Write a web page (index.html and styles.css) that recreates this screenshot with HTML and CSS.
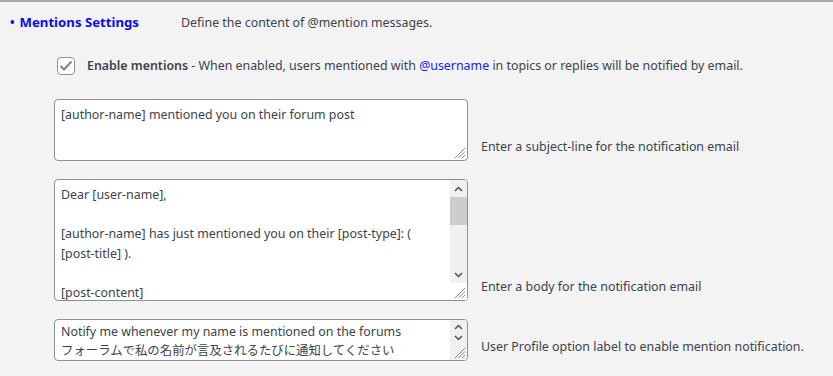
FILE: index.html
```html
<!DOCTYPE html>
<html lang="en">

<head>
    <meta charset="UTF-8">
    <meta name="viewport" content="width=device-width, initial-scale=1.0">
    <title>Mentions Settings</title>
    <link rel="stylesheet" href="styles.css">
</head>

<body>

    <div class="settings">

        <div class="head">
            <h3 class="title"><span class="dot">&bull;</span>Mentions Settings</h3>
            <p class="intro">Define the content of @mention messages.</p>
        </div>

        <label class="check-row">
            <span class="checkbox">
                <svg width="14" height="12" viewBox="0 0 14 12">
                    <polyline points="1.5,6 5,9.5 12.5,1.5" fill="none" stroke="#7e8993" stroke-width="2.2" />
                </svg>
            </span>
            <span class="check-text"><b>Enable mentions</b> - When enabled, users mentioned with <a href="#">@username</a> in topics or replies will be notified by email.</span>
        </label>

        <!-- subject -->
        <div class="field">
            <div class="box box-subject">
                <div class="box-text">[author-name] mentioned you on their forum post</div>
                <span class="grip">
                    <svg width="11" height="11" viewBox="0 0 11 11">
                        <path d="M11 1 L1 11 M11 4.5 L4.5 11 M11 8 L8 11" stroke="#8a8a8a" stroke-width="1" />
                    </svg>
                </span>
            </div>
            <span class="hint">Enter a subject-line for the notification email</span>
        </div>

        <!-- body -->
        <div class="field">
            <div class="box box-body">
                <div class="box-text">
                    Dear [user-name],<br>
                    <br>
                    [author-name] has just mentioned you on their [post-type]: (<br>
                    [post-title] ).<br>
                    <br>
                    [post-content]
                </div>
                <div class="scroll">
                    <span class="arrow">
                        <svg width="9" height="6" viewBox="0 0 9 6"><polyline points="1,5 4.5,1.5 8,5" fill="none" stroke="#505050" stroke-width="1.5" /></svg>
                    </span>
                    <span class="thumb"></span>
                    <span class="track"></span>
                    <span class="arrow">
                        <svg width="9" height="6" viewBox="0 0 9 6"><polyline points="1,1 4.5,4.5 8,1" fill="none" stroke="#505050" stroke-width="1.5" /></svg>
                    </span>
                    <span class="corner">
                        <svg width="11" height="11" viewBox="0 0 11 11">
                            <path d="M11 1 L1 11 M11 4.5 L4.5 11 M11 8 L8 11" stroke="#8a8a8a" stroke-width="1" />
                        </svg>
                    </span>
                </div>
            </div>
            <span class="hint">Enter a body for the notification email</span>
        </div>

        <!-- profile label -->
        <div class="field">
            <div class="box box-label">
                <div class="box-text">
                    Notify me whenever my name is mentioned on the forums<br>
                    フォーラムで私の名前が言及されるたびに通知してください
                </div>
                <div class="scroll scroll-small">
                    <span class="arrow">
                        <svg width="9" height="6" viewBox="0 0 9 6"><polyline points="1,5 4.5,1.5 8,5" fill="none" stroke="#505050" stroke-width="1.5" /></svg>
                    </span>
                    <span class="arrow arrow-low">
                        <svg width="9" height="6" viewBox="0 0 9 6"><polyline points="1,1 4.5,4.5 8,1" fill="none" stroke="#505050" stroke-width="1.5" /></svg>
                    </span>
                    <span class="grip">
                        <svg width="11" height="11" viewBox="0 0 11 11">
                            <path d="M11 1 L1 11 M11 4.5 L4.5 11 M11 8 L8 11" stroke="#8a8a8a" stroke-width="1" />
                        </svg>
                    </span>
                </div>
            </div>
            <span class="hint">User Profile option label to enable mention notification.</span>
        </div>

    </div>

</body>

</html>
```

FILE: styles.css
```css
body {
    margin: 0;
    background-color: #f3f3f3;
    border-top: 2px solid #a7a7a7;
    font-family: "Noto Sans", "Noto Sans CJK JP", sans-serif;
    font-size: 12.4px;
    line-height: 20px;
    color: #3c434a;
}

.settings {
    padding: 10px 0 0 0;
}

.head {
    display: flex;
    align-items: center;
}

.title {
    width: 181px;
    margin: 0;
    padding-left: 10px;
    box-sizing: border-box;
    font-size: 13.2px;
    font-weight: bold;
    color: #0a0aef;
}

.dot {
    margin-right: 5px;
    font-size: 12px;
}

.intro {
    margin: 0;
}

.check-row {
    display: flex;
    align-items: center;
    margin: 23px 0 0 57px;
}

.checkbox {
    width: 16px;
    height: 16px;
    border: 1px solid #8c8f94;
    border-radius: 4px;
    background-color: #fff;
    display: flex;
    align-items: center;
    justify-content: center;
    margin-right: 12px;
}

.check-text b {
    font-weight: 600;
}

.check-text a {
    color: #1a1aff;
    text-decoration: none;
}

.field {
    display: flex;
    align-items: flex-end;
    margin: 18px 0 0 54px;
}

.check-row + .field {
    margin-top: 23px;
}

.box {
    position: relative;
    display: flex;
    width: 414px;
    box-sizing: border-box;
    border: 1px solid #8c8f94;
    border-radius: 4px;
    background-color: #fff;
    overflow: hidden;
}

.box-text {
    flex: 1;
    padding: 5px 6px;
    overflow: hidden;
    white-space: nowrap;
}

.box-subject {
    height: 62px;
}

.box-body {
    height: 122px;
}

.box-body .box-text {
    line-height: 19.5px;
}

.box-label {
    height: 42px;
}

.box-label .box-text {
    padding-top: 2px;
    line-height: 19px;
}

.grip {
    display: flex;
}

.box-subject .grip {
    position: absolute;
    right: 2px;
    bottom: 2px;
}

.scroll {
    width: 17px;
    display: flex;
    flex-direction: column;
    background-color: #f0f0f0;
}

.arrow {
    height: 17px;
    display: flex;
    align-items: center;
    justify-content: center;
    flex-shrink: 0;
}

.thumb {
    height: 28px;
    background-color: #cdcdcd;
}

.track {
    flex: 1;
}

.corner {
    height: 17px;
    background-color: #fff;
    display: flex;
    align-items: flex-end;
    justify-content: flex-end;
    padding: 0 2px 2px 0;
    box-sizing: border-box;
}

.scroll-small .arrow {
    height: 14px;
}

.scroll-small .arrow-low {
    height: 8px;
}

.scroll-small .grip {
    flex: 1;
    align-items: flex-end;
    justify-content: flex-end;
    padding: 0 2px 2px 0;
}

.hint {
    margin: 0 0 4px 13px;
}
```
